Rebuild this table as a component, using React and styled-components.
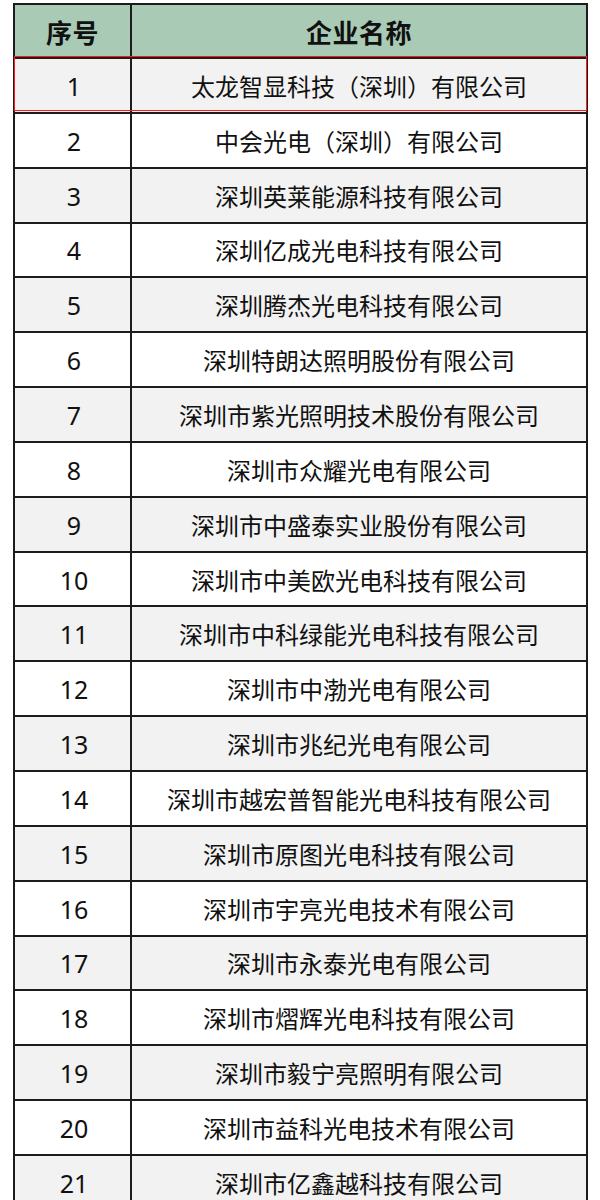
import React from 'react';
import styled, { createGlobalStyle } from 'styled-components';

const GlobalStyle = createGlobalStyle`
  html, body {
    margin: 0;
    padding: 0;
    background: #ffffff;
  }
  body {
    font-family: "Noto Sans CJK SC", "Noto Sans", sans-serif;
    color: #000;
  }
`;

const Page = styled.div`
  padding: 3px 0 0 13px;
  width: 600px;
  height: 1200px;
  overflow: hidden;
  box-sizing: border-box;
`;

const Table = styled.div`
  width: 575px;
  border: 2px solid #1c1c1c;
  border-bottom: none;
  box-sizing: border-box;
`;

const Row = styled.div`
  position: relative;
  display: grid;
  grid-template-columns: 117px 1fr;
  height: ${(p) => (p.$head ? '54px' : '54.85px')};
  border-bottom: 2px solid #1c1c1c;
  box-sizing: border-box;
  background: ${(p) => (p.$head ? '#a9cbb5' : p.$alt ? '#f2f2f2' : '#ffffff')};

  ${(p) =>
    p.$selected &&
    `
    &::after {
      content: '';
      position: absolute;
      top: -3px;
      left: -1px;
      right: -1px;
      bottom: 1px;
      border: 1px solid #ff1a1a;
      pointer-events: none;
    }
  `}
`;

const Cell = styled.div`
  display: flex;
  align-items: center;
  justify-content: center;
  white-space: nowrap;
  border-right: ${(p) => (p.$first ? '2px solid #1c1c1c' : 'none')};
`;

const HeadText = styled.span`
  font-family: "Noto Sans CJK SC", sans-serif;
  font-weight: 700;
  font-size: 26px;
  color: #111;
  letter-spacing: 0.5px;
`;

const Num = styled.span`
  font-family: "Noto Sans", "Noto Sans CJK SC", sans-serif;
  font-size: 25px;
  color: #111;
  padding-left: 3px;
  margin-top: 1px;
`;

const Name = styled.span`
  font-family: "Noto Sans CJK SC", sans-serif;
  font-size: 24px;
  color: #111;
`;

const companies = [
  '太龙智显科技（深圳）有限公司',
  '中会光电（深圳）有限公司',
  '深圳英莱能源科技有限公司',
  '深圳亿成光电科技有限公司',
  '深圳腾杰光电科技有限公司',
  '深圳特朗达照明股份有限公司',
  '深圳市紫光照明技术股份有限公司',
  '深圳市众耀光电有限公司',
  '深圳市中盛泰实业股份有限公司',
  '深圳市中美欧光电科技有限公司',
  '深圳市中科绿能光电科技有限公司',
  '深圳市中渤光电有限公司',
  '深圳市兆纪光电有限公司',
  '深圳市越宏普智能光电科技有限公司',
  '深圳市原图光电科技有限公司',
  '深圳市宇亮光电技术有限公司',
  '深圳市永泰光电有限公司',
  '深圳市熠辉光电科技有限公司',
  '深圳市毅宁亮照明有限公司',
  '深圳市益科光电技术有限公司',
  '深圳市亿鑫越科技有限公司',
];

export default function App() {
  return (
    <Page>
      <GlobalStyle />
      <Table>
        <Row $head>
          <Cell $first>
            <HeadText>序号</HeadText>
          </Cell>
          <Cell>
            <HeadText>企业名称</HeadText>
          </Cell>
        </Row>
        {companies.map((name, i) => (
          <Row key={name} $alt={i % 2 === 0} $selected={i === 0}>
            <Cell $first>
              <Num>{i + 1}</Num>
            </Cell>
            <Cell>
              <Name>{name}</Name>
            </Cell>
          </Row>
        ))}
      </Table>
    </Page>
  );
}
